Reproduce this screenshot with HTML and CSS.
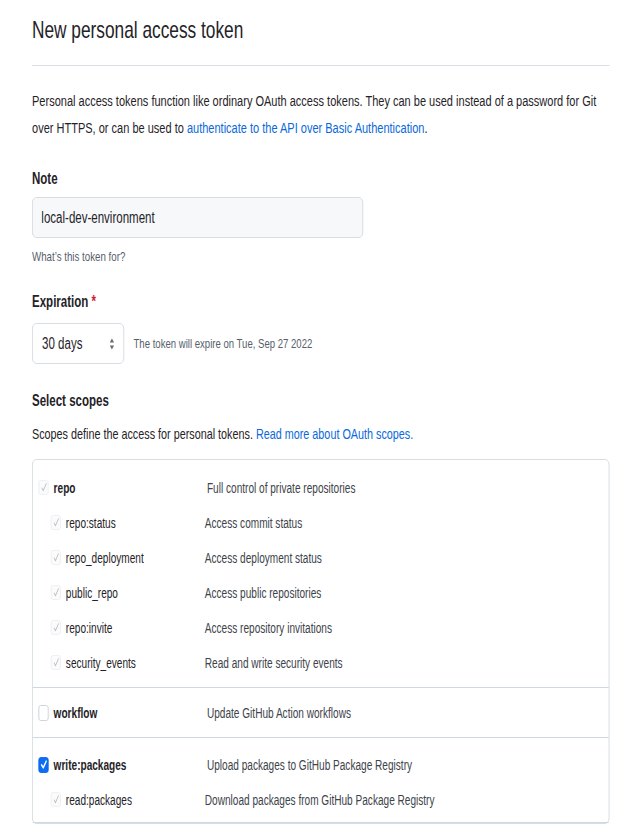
FILE: index.html
```html
<!DOCTYPE html>
<html lang="en">
<head>
<meta charset="utf-8">
<title>New personal access token</title>
<link rel="stylesheet" href="styles.css">
</head>
<body>
<main class="page">
  <h1 class="title">New personal access token</h1>
  <p class="intro">Personal access tokens function like ordinary OAuth access tokens. They can be used instead of a password for Git over HTTPS, or can be used to <a href="#">authenticate to the API over Basic Authentication</a>.</p>

  <div class="field note-field">
    <label class="label" for="note">Note</label>
    <input id="note" class="text-input" type="text" value="local-dev-environment">
    <p class="hint">What’s this token for?</p>
  </div>

  <div class="field exp-field">
    <label class="label">Expiration <span class="req">*</span></label>
    <div class="exp-row">
      <div class="select">
        <span>30 days</span>
        <svg class="updown" viewBox="0 0 8 14" width="8" height="14"><path d="M4 1.5 L7 5.5 H1 Z M4 12.5 L7 8.5 H1 Z" fill="#6b6b6b"/></svg>
      </div>
      <span class="exp-note">The token will expire on Tue, Sep 27 2022</span>
    </div>
  </div>

  <h2 class="label scopes-title">Select scopes</h2>
  <p class="scopes-desc">Scopes define the access for personal tokens. <a href="#">Read more about OAuth scopes.</a></p>

  <div class="scopes">
    <div class="group group-repo">
      <div class="row">
        <span class="name"><span class="cb cb-dis"><svg viewBox="0 0 12 12"><path d="M3 6.5 L5 9.5 L9.5 2" /></svg></span><b>repo</b></span>
        <span class="desc">Full control of private repositories</span>
      </div>
      <div class="row sub">
        <span class="name"><span class="cb cb-dis"><svg viewBox="0 0 12 12"><path d="M3 6.5 L5 9.5 L9.5 2" /></svg></span>repo:status</span>
        <span class="desc">Access commit status</span>
      </div>
      <div class="row sub">
        <span class="name"><span class="cb cb-dis"><svg viewBox="0 0 12 12"><path d="M3 6.5 L5 9.5 L9.5 2" /></svg></span>repo_deployment</span>
        <span class="desc">Access deployment status</span>
      </div>
      <div class="row sub">
        <span class="name"><span class="cb cb-dis"><svg viewBox="0 0 12 12"><path d="M3 6.5 L5 9.5 L9.5 2" /></svg></span>public_repo</span>
        <span class="desc">Access public repositories</span>
      </div>
      <div class="row sub">
        <span class="name"><span class="cb cb-dis"><svg viewBox="0 0 12 12"><path d="M3 6.5 L5 9.5 L9.5 2" /></svg></span>repo:invite</span>
        <span class="desc">Access repository invitations</span>
      </div>
      <div class="row sub">
        <span class="name"><span class="cb cb-dis"><svg viewBox="0 0 12 12"><path d="M3 6.5 L5 9.5 L9.5 2" /></svg></span>security_events</span>
        <span class="desc">Read and write security events</span>
      </div>
    </div>
    <div class="group group-workflow">
      <div class="row">
        <span class="name"><span class="cb cb-empty"></span><b>workflow</b></span>
        <span class="desc">Update GitHub Action workflows</span>
      </div>
    </div>
    <div class="group group-packages">
      <div class="row">
        <span class="name"><span class="cb cb-on"><svg viewBox="0 0 12 12"><path d="M2.5 6.5 L5 9.5 L9.5 2.5" /></svg></span><b>write:packages</b></span>
        <span class="desc">Upload packages to GitHub Package Registry</span>
      </div>
      <div class="row sub">
        <span class="name"><span class="cb cb-dis"><svg viewBox="0 0 12 12"><path d="M3 6.5 L5 9.5 L9.5 2" /></svg></span>read:packages</span>
        <span class="desc">Download packages from GitHub Package Registry</span>
      </div>
    </div>
  </div>
</main>
</body>
</html>
```

FILE: styles.css
```css
html, body {
  margin: 0;
  padding: 0;
  background: #ffffff;
  overflow: hidden;
}

body {
  font-family: "Liberation Sans", Arial, sans-serif;
  color: #1f2328;
}

.page {
  width: 802px;
  margin-left: 32px;
  padding-top: 15px;
  transform: scaleX(0.72);
  transform-origin: 0 0;
}

a {
  color: #0969da;
  text-decoration: none;
}

.title {
  margin: 0;
  font-size: 24px;
  font-weight: 400;
  line-height: 30px;
  padding-bottom: 20px;
  border-bottom: 1px solid #d8dee4;
}

.intro {
  margin: 21px 0 0;
  font-size: 15.3px;
  line-height: 27px;
}

.field {
  display: flex;
  flex-direction: column;
  align-items: flex-start;
}

.note-field {
  margin-top: 26px;
}

.label {
  display: block;
  margin: 0;
  font-size: 16px;
  font-weight: 700;
  line-height: 24px;
}

.req {
  color: #cf222e;
}

.text-input {
  box-sizing: border-box;
  width: 460px;
  height: 41px;
  margin-top: 6px;
  padding: 0 12px;
  font-family: inherit;
  font-size: 16px;
  color: #1f2328;
  background: #f6f8fa;
  border: 1px solid #d0d7de;
  border-radius: 6px;
  outline: none;
}

.hint {
  margin: 10px 0 0;
  font-size: 13.5px;
  line-height: 18px;
  color: #57606a;
}

.exp-field {
  margin-top: 24px;
}

.exp-row {
  display: flex;
  align-items: center;
  gap: 13px;
  margin-top: 9px;
}

.select {
  box-sizing: border-box;
  width: 128px;
  height: 41px;
  padding: 0 12px 0 13px;
  display: flex;
  align-items: center;
  justify-content: space-between;
  font-size: 16px;
  background: #ffffff;
  border: 1px solid #d0d7de;
  border-radius: 6px;
}

.updown {
  display: block;
}

.exp-note {
  font-size: 13.3px;
  color: #57606a;
}

.scopes-title {
  margin-top: 25px;
}

.scopes-desc {
  margin: 9px 0 0;
  font-size: 15px;
  line-height: 24px;
}

.scopes {
  margin-top: 13px;
  border: 1px solid #d0d7de;
  border-radius: 6px;
}

.group {
  border-bottom: 1px solid #d0d7de;
}

.group-repo {
  padding: 10px 0 7px;
}

.group-workflow {
  padding: 7px 0;
}

.group-packages {
  padding: 9px 0 5px;
}

.row {
  display: flex;
  align-items: center;
  height: 35px;
  padding-left: 8px;
  font-size: 14px;
}

.name {
  display: flex;
  align-items: center;
  gap: 7px;
  width: 234px;
  flex: none;
}

.name b {
  font-weight: 700;
}

.sub .name {
  padding-left: 17px;
  width: 214px;
}

.desc {
  color: #3d434a;
}

.cb {
  box-sizing: border-box;
  display: flex;
  align-items: center;
  justify-content: center;
  width: 14px;
  height: 15px;
  border-radius: 3px;
  flex: none;
}

.cb svg {
  width: 11px;
  height: 11px;
  fill: none;
  stroke-linecap: round;
  stroke-linejoin: round;
}

.cb-dis {
  border: 1px solid #eceef1;
  background: #fbfbfc;
}

.cb-dis svg {
  stroke: #b8bcc2;
  stroke-width: 1.2;
}

.cb-empty {
  border: 1px solid #c8cdd3;
  background: #ffffff;
  height: 16px;
}

.cb-on {
  background: #0b6ef3;
  border: 1px solid #0a64dd;
  height: 16px;
}

.cb-on svg {
  stroke: #ffffff;
  stroke-width: 2;
}
```
